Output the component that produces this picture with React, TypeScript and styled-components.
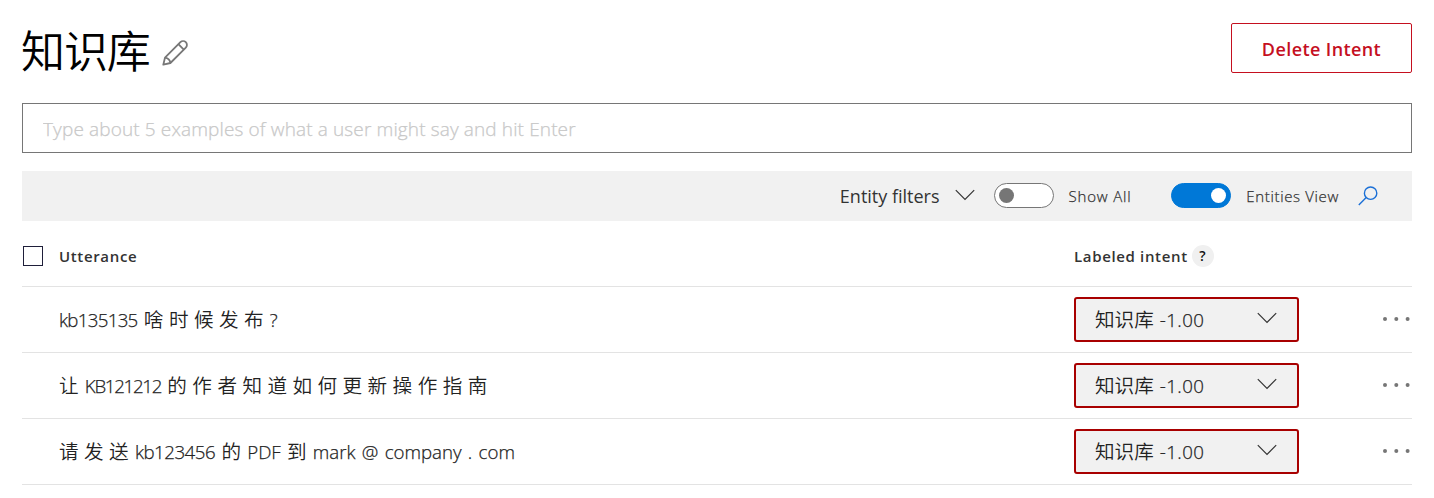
import React from 'react';
import styled, { createGlobalStyle, css } from 'styled-components';

const GlobalStyle = createGlobalStyle`
  *, *::before, *::after { box-sizing: border-box; }
  body {
    margin: 0;
    background: #fff;
    color: #333;
    font-family: "Open Sans", "Noto Sans CJK SC", sans-serif;
  }
  button, input { font-family: inherit; }
`;

const semilight = css`
  font-weight: 300;
  -webkit-text-stroke: 0.25px currentColor;
`;

const Page = styled.main`
  display: flex;
  flex-direction: column;
  padding: 23px 22px 0;
  height: 498px;
  overflow: hidden;
`;

const Header = styled.header`
  display: flex;
  justify-content: space-between;
  height: 50px;
`;

const TitleGroup = styled.div`
  display: flex;
  align-items: center;
  gap: 12px;
  padding-top: 6px;
  margin-left: -1px;
`;

const Title = styled.h1`
  margin: 0;
  color: #000;
  font-size: 44px;
  font-weight: 350;
  line-height: 50px;
  letter-spacing: -1.1px;
`;

const IconButton = styled.button<{ $width: number; $height: number; $drop?: number }>`
  display: flex;
  align-items: center;
  justify-content: center;
  width: ${({ $width }) => $width}px;
  height: ${({ $height }) => $height}px;
  margin-top: ${({ $drop = 0 }) => $drop}px;
  padding: 0;
  border: 0;
  background: none;
`;

const DeleteButton = styled.button`
  width: 181px;
  height: 50px;
  padding: 2px 0 0;
  border: 1px solid #c50f1f;
  border-radius: 2px;
  background: #fff;
  color: #c50f1f;
  font-size: 18px;
  font-weight: 550;
  letter-spacing: 0.4px;
`;

const UtteranceInput = styled.input`
  width: 100%;
  height: 50px;
  margin-top: 30px;
  padding: 2px 20px 0;
  border: 1px solid #767676;
  font-size: 19px;
  ${semilight}
  letter-spacing: 0.13px;
  &::placeholder { color: #c8c8c8; opacity: 1; }
`;

const Toolbar = styled.div`
  display: flex;
  align-items: center;
  justify-content: flex-end;
  flex: none;
  height: 50px;
  margin-top: 18px;
  padding: 0 34px 1px 0;
  background: #f1f1f1;
`;

const FilterMenu = styled.div`
  display: flex;
  align-items: center;
  gap: 15px;
  margin-right: 19px;
  font-size: 18px;
  font-weight: 400;
`;

const SwitchField = styled.label<{ $gap: number }>`
  display: flex;
  align-items: center;
  gap: 15px;
  margin-right: ${({ $gap }) => $gap}px;
`;

const SwitchText = styled.span<{ $spacing: number }>`
  font-size: 15px;
  ${semilight}
  letter-spacing: ${({ $spacing }) => $spacing}px;
`;

const Track = styled.span<{ $on?: boolean }>`
  display: flex;
  align-items: center;
  width: 60px;
  height: 25px;
  padding: 0 4px;
  border: 1px solid #767676;
  border-radius: 13px;
  background: #fff;
  ${({ $on }) => $on && css`
    justify-content: flex-end;
    border-color: #0078d7;
    background: #0078d7;
  `}
`;

const Knob = styled.span<{ $on?: boolean }>`
  width: 15px;
  height: 15px;
  border-radius: 50%;
  background: ${({ $on }) => ($on ? '#fff' : '#767676')};
`;

const Grid = styled.div`
  display: flex;
  flex-direction: column;
`;

const Row = styled.div`
  display: grid;
  grid-template-columns: 37px 1015px 225px 1fr;
  align-items: center;
  height: 66px;
  border-bottom: 1px solid #e3e3e3;
`;

const HeadRow = styled(Row)`
  padding-top: 4px;
  font-size: 15px;
  font-weight: 600;
  letter-spacing: 0.65px;
`;

const Checkbox = styled.span`
  width: 20px;
  height: 20px;
  margin-left: 1px;
  border: 1px solid #1f1f3a;
`;

const HeadCell = styled.div`
  display: flex;
  align-items: center;
  gap: 4px;
  white-space: nowrap;
`;

const Help = styled.span`
  width: 22px;
  height: 22px;
  border-radius: 50%;
  background: #f0f0f0;
  color: #111;
  font-size: 14px;
  line-height: 22px;
  text-align: center;
`;

const Phrase = styled.div`
  grid-column: 2;
  color: #222;
  font-size: 18.7px;
  ${semilight}
  line-height: 28px;
  white-space: pre;
  word-spacing: 1.4px;
`;

const Han = styled.span`
  font-size: 19.6px;
  font-weight: 350;
  -webkit-text-stroke: 0;
  word-spacing: 0.35px;
`;

const Code = styled.span<{ $spacing: number }>`
  letter-spacing: ${({ $spacing }) => $spacing}px;
`;

const IntentSelect = styled.div`
  display: flex;
  align-items: center;
  justify-content: space-between;
  width: 225px;
  height: 45px;
  padding: 0 20px 2px 19px;
  border: 2px solid #a80000;
  border-radius: 3px;
  background: #f1f1f1;
  color: #222;
  font-size: 18.7px;
  ${semilight}
  white-space: pre;
`;

const Score = styled.span`
  letter-spacing: 0.45px;
  word-spacing: 0.6px;
`;

const More = styled.div`
  display: flex;
  justify-content: flex-end;
  padding: 0 2px 2px 0;
`;

const Chevron = () => (
  <svg width="20" height="14" viewBox="0 0 20 14" fill="none" stroke="#333" strokeWidth="1.2">
    <path d="M0.8 1.2 10 10.4 19.2 1.2" />
  </svg>
);

const Pencil = () => (
  <svg width="26" height="26" viewBox="0 0 26 26" fill="none" stroke="#777" strokeWidth="1.8" strokeLinejoin="round">
    <path d="M1.300 24.700 3 17.600 18.400 2.200a3.800 3.800 0 0 1 5.400 5.400L8.400 23Z" />
    <path d="M3 17.600c2.700.400 5 2.600 5.400 5.400M16.400 4.200l5.400 5.400" />
  </svg>
);

const Search = () => (
  <svg width="20" height="20" viewBox="0 0 20 20" fill="none" stroke="#1a6fd6" strokeWidth="1.4">
    <circle cx="12.600" cy="7.200" r="6.200" />
    <path d="M8.200 11.600.8 19" />
  </svg>
);

const Dots = () => (
  <svg width="28" height="6" viewBox="0 0 28 6" fill="#767676">
    <circle cx="3" cy="3" r="2" />
    <circle cx="14.300" cy="3" r="2" />
    <circle cx="25.600" cy="3" r="2" />
  </svg>
);

const phrases: React.ReactNode[] = [
  <><Code $spacing={-0.7}>kb135135</Code> <Han>啥 时 候 发 布</Han> ?</>,
  <><Han>让</Han> <Code $spacing={-1.3}>KB121212</Code> <Han>的 作 者 知 道 如 何 更 新 操 作 指 南</Han></>,
  <><Han>请 发 送</Han> <Code $spacing={-0.5}>kb123456</Code> <Han>的</Han> PDF <Han>到</Han> mark @ company . com</>,
];

export default function App() {
  return (
    <Page>
      <GlobalStyle />
      <Header>
        <TitleGroup>
          <Title>知识库</Title>
          <IconButton $width={26} $height={26} $drop={4} aria-label="Edit"><Pencil /></IconButton>
        </TitleGroup>
        <DeleteButton>Delete Intent</DeleteButton>
      </Header>
      <UtteranceInput placeholder="Type about 5 examples of what a user might say and hit Enter" />
      <Toolbar>
        <FilterMenu>Entity filters<Chevron /></FilterMenu>
        <SwitchField $gap={40}>
          <Track><Knob /></Track>
          <SwitchText $spacing={0.8}>Show All</SwitchText>
        </SwitchField>
        <SwitchField $gap={19}>
          <Track $on><Knob $on /></Track>
          <SwitchText $spacing={0.65}>Entities View</SwitchText>
        </SwitchField>
        <IconButton $width={20} $height={20} aria-label="Search"><Search /></IconButton>
      </Toolbar>
      <Grid>
        <HeadRow>
          <Checkbox />
          <HeadCell>Utterance</HeadCell>
          <HeadCell>Labeled intent<Help>?</Help></HeadCell>
        </HeadRow>
        {phrases.map((phrase, i) => (
          <Row key={i}>
            <Phrase>{phrase}</Phrase>
            <IntentSelect><span><Han>知识库</Han><Score> -1.00</Score></span><Chevron /></IntentSelect>
            <More><Dots /></More>
          </Row>
        ))}
      </Grid>
    </Page>
  );
}
